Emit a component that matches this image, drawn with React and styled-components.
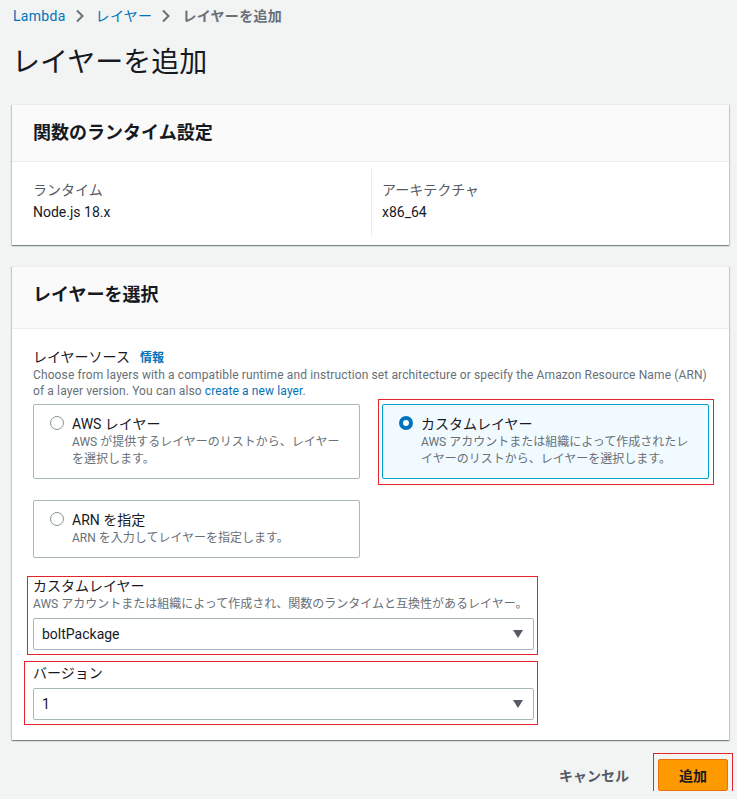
import React from 'react';
import styled, { createGlobalStyle } from 'styled-components';

const GlobalStyle = createGlobalStyle`
  body {
    margin: 0;
    background: #f2f3f3;
    font-family: Roboto, "Noto Sans CJK JP", sans-serif;
    color: #16191f;
  }
`;

const Chevron = () => (
  <ChevronSvg viewBox="0 0 16 16" width="16" height="16">
    <polyline points="5,2.5 10.5,8 5,13.5" fill="none" stroke="#687078" strokeWidth="2" />
  </ChevronSvg>
);

const Caret = () => (
  <CaretSvg viewBox="0 0 10 8" width="10" height="8">
    <polygon points="0,0 10,0 5,8" fill="#545b64" />
  </CaretSvg>
);

const App = () => {
  return (
    <>
      <GlobalStyle />
      <Page>
        <Breadcrumbs>
          <Crumb href="#">Lambda</Crumb>
          <Chevron />
          <Crumb href="#">レイヤー</Crumb>
          <Chevron />
          <Crumb $current>レイヤーを追加</Crumb>
        </Breadcrumbs>

        <Title>レイヤーを追加</Title>

        <Card>
          <CardHeader>
            <CardTitle>関数のランタイム設定</CardTitle>
          </CardHeader>
          <Columns>
            <Column>
              <KeyLabel>ランタイム</KeyLabel>
              <KeyValue>Node.js 18.x</KeyValue>
            </Column>
            <Column $divided>
              <KeyLabel>アーキテクチャ</KeyLabel>
              <KeyValue>x86_64</KeyValue>
            </Column>
          </Columns>
        </Card>

        <Card $gap>
          <CardHeader $tall>
            <CardTitle>レイヤーを選択</CardTitle>
          </CardHeader>
          <CardBody>
            <FieldLabel>
              レイヤーソース<InfoLink href="#">情報</InfoLink>
            </FieldLabel>
            <FieldHint $wide>
              Choose from layers with a compatible runtime and instruction set architecture or specify the Amazon Resource Name (ARN) of a layer version. You can also <HintLink href="#">create a new layer</HintLink>.
            </FieldHint>

            <Tiles>
              <Tile>
                <TileHead>
                  <Radio />
                  <TileTitle>AWS レイヤー</TileTitle>
                </TileHead>
                <TileText>AWS が提供するレイヤーのリストから、レイヤーを選択します。</TileText>
              </Tile>
              <Annotated $t={-5} $r={-5} $b={-6} $l={-4}>
                <Tile $selected>
                  <TileHead>
                    <Radio $checked />
                    <TileTitle>カスタムレイヤー</TileTitle>
                  </TileHead>
                  <TileText>AWS アカウントまたは組織によって作成されたレイヤーのリストから、レイヤーを選択します。</TileText>
                </Tile>
              </Annotated>
              <Tile>
                <TileHead>
                  <Radio />
                  <TileTitle>ARN を指定</TileTitle>
                </TileHead>
                <TileText>ARN を入力してレイヤーを指定します。</TileText>
              </Tile>
            </Tiles>

            <Field $first>
              <Annotated $t={2} $r={-4} $b={-5} $l={-6}>
                <FieldLabel>カスタムレイヤー</FieldLabel>
                <FieldHint>AWS アカウントまたは組織によって作成され、関数のランタイムと互換性があるレイヤー。</FieldHint>
                <Select>
                  <span>boltPackage</span>
                  <Caret />
                </Select>
              </Annotated>
            </Field>

            <Field>
              <Annotated $t={0} $r={-4} $b={-5} $l={-9}>
                <FieldLabel>バージョン</FieldLabel>
                <Select $spaced>
                  <span>1</span>
                  <Caret />
                </Select>
              </Annotated>
            </Field>
          </CardBody>
        </Card>

        <Footer>
          <CancelButton>キャンセル</CancelButton>
          <Annotated $t={-6} $r={-5} $b={-6} $l={-5}>
            <PrimaryButton>追加</PrimaryButton>
          </Annotated>
        </Footer>
      </Page>
    </>
  );
};

const Page = styled.main`
  padding: 6px 8px 0 12px;
`;

const Breadcrumbs = styled.nav`
  display: flex;
  align-items: center;
  height: 20px;
  padding-left: 1px;
  font-size: 14px;
`;

const Crumb = styled.a`
  color: ${p => (p.$current ? '#687078' : '#0073bb')};
  font-weight: ${p => (p.$current ? 700 : 400)};
  text-decoration: none;
  line-height: 20px;
  letter-spacing: 0.3px;
`;

const ChevronSvg = styled.svg`
  margin: 0 8px 0 6px;
  display: block;
`;

const Title = styled.h1`
  margin: 19px 0 0;
  font-size: 28px;
  line-height: 36px;
  font-weight: 400;
  color: #16191f;
`;

const Card = styled.section`
  margin-top: ${p => (p.$gap ? '21px' : '23px')};
  background: #fff;
  box-shadow: 0 1px 1px 0 rgba(0, 28, 36, 0.3), 1px 1px 1px 0 rgba(0, 28, 36, 0.15),
    -1px 1px 1px 0 rgba(0, 28, 36, 0.15);
  border-top: 1px solid #eaeded;
`;

const CardHeader = styled.header`
  background: #fafafa;
  border-bottom: 1px solid #eaeded;
  padding: ${p => (p.$tall ? '17px 21px 22px' : '17px 21px 17px')};
`;

const CardTitle = styled.h2`
  margin: 0;
  font-size: 18px;
  line-height: 22px;
  font-weight: 700;
`;

const Columns = styled.div`
  display: grid;
  grid-template-columns: 1fr 1fr;
  padding: 7px 20px 9px 21px;
`;

const Column = styled.div`
  padding: 10px 0 13px ${p => (p.$divided ? '10px' : '0')};
  border-left: ${p => (p.$divided ? '1px solid #eaeded' : 'none')};
`;

const KeyLabel = styled.div`
  font-size: 14px;
  line-height: 22px;
  color: #545b64;
`;

const KeyValue = styled.div`
  font-size: 14px;
  line-height: 22px;
  color: #16191f;
`;

const CardBody = styled.div`
  padding: 16px 20px 20px 21px;
`;

const FieldLabel = styled.div`
  display: flex;
  align-items: center;
  height: 22px;
  font-size: 14px;
  color: #16191f;
`;

const InfoLink = styled.a`
  margin-left: 10px;
  font-size: 12px;
  font-weight: 700;
  color: #0073bb;
  text-decoration: none;
`;

const FieldHint = styled.div`
  font-size: 12px;
  line-height: 16px;
  color: #687078;
  letter-spacing: ${p => (p.$wide ? '0.12px' : '0')};
`;

const HintLink = styled.a`
  color: #0073bb;
  text-decoration: none;
`;

const Tiles = styled.div`
  display: grid;
  grid-template-columns: 327px 327px;
  gap: 21px 22px;
  margin-top: 5px;
`;

const Annotated = styled.div`
  position: relative;

  &::after {
    content: '';
    position: absolute;
    top: ${p => p.$t}px;
    right: ${p => p.$r}px;
    bottom: ${p => p.$b}px;
    left: ${p => p.$l}px;
    border: 1px solid #e3242b;
    pointer-events: none;
  }
`;

const Tile = styled.div`
  box-sizing: border-box;
  height: 100%;
  padding: 7px 16px 10px;
  border: 1px solid ${p => (p.$selected ? '#00a1c9' : '#aab7b8')};
  background: ${p => (p.$selected ? '#f1faff' : '#fff')};
  border-radius: 2px;
`;

const TileHead = styled.div`
  display: flex;
  align-items: center;
  gap: 8px;
  height: 22px;
`;

const Radio = styled.span`
  box-sizing: border-box;
  width: 14px;
  height: 14px;
  border-radius: 50%;
  background: #fff;
  border: ${p => (p.$checked ? '4px solid #0073bb' : '1.5px solid #879596')};
`;

const TileTitle = styled.span`
  font-size: 14px;
  color: #16191f;
`;

const TileText = styled.div`
  padding-left: 22px;
  font-size: 12px;
  line-height: 17px;
  color: #687078;
`;

const Field = styled.div`
  max-width: 501px;
  margin-top: ${p => (p.$first ? '16px' : '11px')};
`;

const Select = styled.div`
  box-sizing: border-box;
  display: flex;
  align-items: center;
  justify-content: space-between;
  height: 32px;
  margin-top: ${p => (p.$spaced ? '5px' : '6px')};
  padding: 0 10px 0 8px;
  border: 1px solid #aab7b8;
  border-radius: 2px;
  background: #fff;
  font-size: 14px;
  color: #16191f;
`;

const CaretSvg = styled.svg`
  display: block;
`;

const Footer = styled.div`
  display: flex;
  justify-content: flex-end;
  align-items: center;
  margin-top: 19px;
  padding-right: 1px;
`;

const CancelButton = styled.button`
  margin-right: 9px;
  padding: 4px 20px;
  border: none;
  background: none;
  font-family: inherit;
  font-size: 14px;
  font-weight: 700;
  color: #545b64;
`;

const PrimaryButton = styled.button`
  display: block;
  height: 32px;
  padding: 0 20px;
  border: 1px solid #ec7211;
  border-radius: 2px;
  background: #ff9900;
  font-family: inherit;
  font-size: 14px;
  font-weight: 700;
  color: #16191f;
`;

export default App;
